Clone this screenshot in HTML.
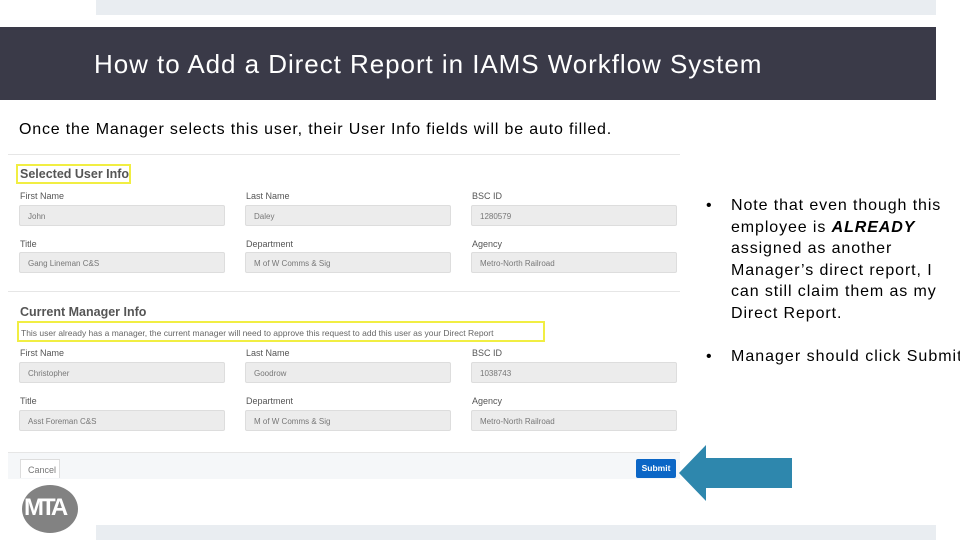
<!DOCTYPE html>
<html><head><style>
body{margin:0;width:960px;height:540px;position:relative;overflow:hidden;background:#fff;font-family:"Liberation Sans",sans-serif}
.a{position:absolute}
.lab{position:absolute;font-size:9px;color:#555}
.inp{position:absolute;height:21px;width:206px;background:#ececec;border:1px solid #ddd;border-radius:2px;box-sizing:border-box;font-size:8px;color:#777;padding:6px 0 0 8px}
</style></head><body>
<div class="a" style="left:96px;top:0;width:840px;height:15px;background:#e9edf1"></div>
<div class="a" style="left:0;top:27px;width:936px;height:73px;background:#3a3a48"></div>
<div class="a" style="left:94px;top:49px;font-size:26px;letter-spacing:0.95px;color:#fff;white-space:nowrap">How to Add a Direct Report in IAMS Workflow System</div>
<div class="a" style="left:19px;top:121px;font-size:16px;letter-spacing:0.82px;color:#000;white-space:nowrap">Once the Manager selects this user, their User Info fields will be auto filled.</div>
<div class="a" style="left:8px;top:154px;width:672px;height:1px;background:#e6e6e6"></div>
<div class="a" style="left:16px;top:164px;width:115px;height:20px;border:2px solid #f1ee43;box-sizing:border-box"></div>
<div class="a" style="left:20px;top:167px;font-size:12.5px;font-weight:bold;color:#555">Selected User Info</div>
<div class="lab" style="left:20px;top:191px">First Name</div><div class="lab" style="left:246px;top:191px">Last Name</div><div class="lab" style="left:472px;top:191px">BSC ID</div>
<div class="inp" style="left:19px;top:205px">John</div><div class="inp" style="left:245px;top:205px">Daley</div><div class="inp" style="left:471px;top:205px">1280579</div>
<div class="lab" style="left:20px;top:239px">Title</div><div class="lab" style="left:246px;top:239px">Department</div><div class="lab" style="left:472px;top:239px">Agency</div>
<div class="inp" style="left:19px;top:252px">Gang Lineman C&amp;S</div><div class="inp" style="left:245px;top:252px">M of W Comms &amp; Sig</div><div class="inp" style="left:471px;top:252px">Metro-North Railroad</div>
<div class="a" style="left:8px;top:291px;width:672px;height:1px;background:#e6e6e6"></div>
<div class="a" style="left:20px;top:305px;font-size:12.5px;font-weight:bold;color:#555">Current Manager Info</div>
<div class="a" style="left:17px;top:321px;width:528px;height:21px;border:2px solid #f1ee43;box-sizing:border-box;font-size:8.5px;color:#666;padding:5px 0 0 2px;white-space:nowrap">This user already has a manager, the current manager will need to approve this request to add this user as your Direct Report</div>
<div class="lab" style="left:20px;top:348px">First Name</div><div class="lab" style="left:246px;top:348px">Last Name</div><div class="lab" style="left:472px;top:348px">BSC ID</div>
<div class="inp" style="left:19px;top:362px">Christopher</div><div class="inp" style="left:245px;top:362px">Goodrow</div><div class="inp" style="left:471px;top:362px">1038743</div>
<div class="lab" style="left:20px;top:396px">Title</div><div class="lab" style="left:246px;top:396px">Department</div><div class="lab" style="left:472px;top:396px">Agency</div>
<div class="inp" style="left:19px;top:410px">Asst Foreman C&amp;S</div><div class="inp" style="left:245px;top:410px">M of W Comms &amp; Sig</div><div class="inp" style="left:471px;top:410px">Metro-North Railroad</div>
<div class="a" style="left:8px;top:452px;width:672px;height:26px;background:#f5f7f9;border-top:1px solid #e6e6e6"></div>
<div class="a" style="left:20px;top:459px;width:40px;height:19px;background:#fff;border:1px solid #ddd;border-bottom:none;box-sizing:border-box;font-size:9px;color:#777;padding:5px 0 0 7px">Cancel</div>
<div class="a" style="left:636px;top:459px;width:40px;height:19px;background:#0b66c6;border-radius:2px;font-size:8.5px;color:#fff;text-align:center;line-height:19px;font-weight:bold">Submit</div>
<svg class="a" style="left:0;top:0" width="960" height="540"><polygon points="679,473 706,445 706,458 792,458 792,488 706,488 706,501" fill="#2e87ad"/>
<ellipse cx="50" cy="509" rx="28" ry="24" fill="#828282"/></svg>
<div class="a" style="left:24px;top:494px;font-size:24px;font-weight:bold;color:#fff;letter-spacing:-3px">MTA</div>
<div class="a" style="left:96px;top:525px;width:840px;height:15px;background:#e9edf1"></div>
<div class="a" style="left:706px;top:195px;font-size:16px;line-height:21.6px;color:#000">•</div>
<div class="a" style="left:731px;top:195px;width:229px;font-size:16px;letter-spacing:0.9px;line-height:21.6px;color:#000">Note that even though this employee is <b><i>ALREADY</i></b> assigned as another Manager’s direct report, I can still claim them as my Direct Report.</div>
<div class="a" style="left:706px;top:346px;font-size:16px;line-height:21.6px;color:#000">•</div>
<div class="a" style="left:731px;top:346px;font-size:16px;letter-spacing:1px;line-height:21.6px;color:#000;white-space:nowrap">Manager should click Submit</div>
</body></html>
